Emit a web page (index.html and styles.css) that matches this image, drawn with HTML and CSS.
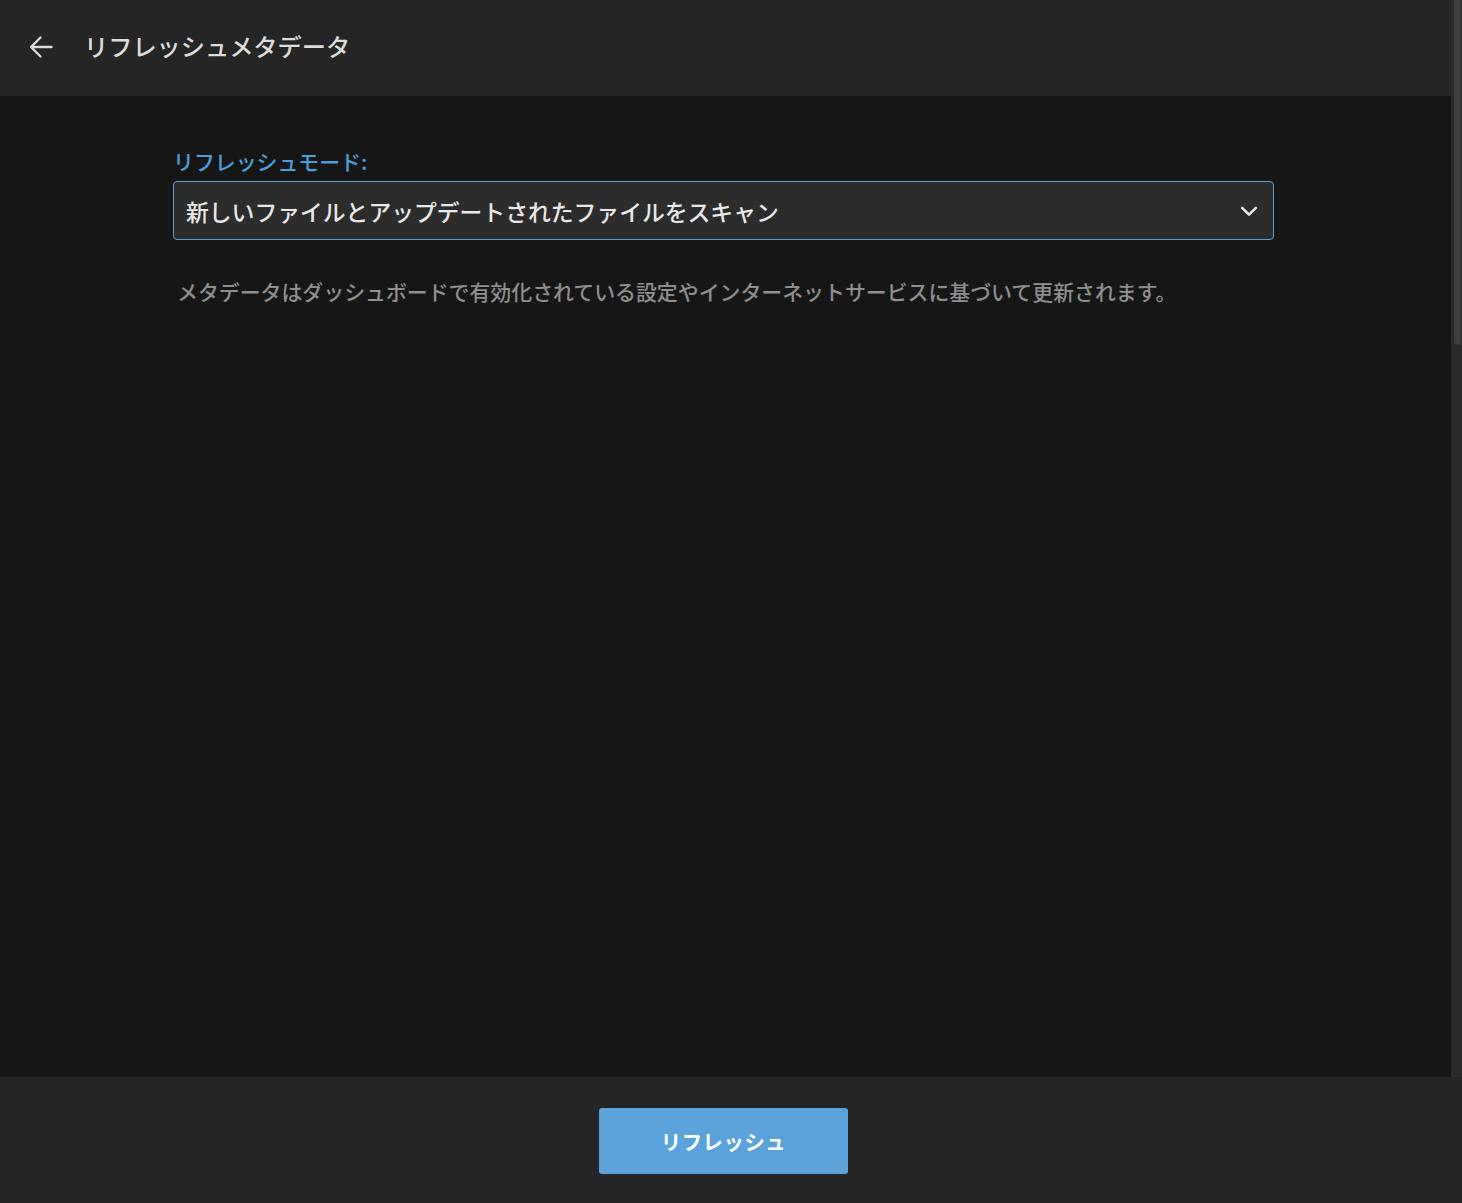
FILE: index.html
```html
<!DOCTYPE html>
<html lang="ja">
<head>
<meta charset="utf-8">
<title>リフレッシュメタデータ</title>
<link rel="stylesheet" href="styles.css">
</head>
<body>
<div class="app">
  <div class="top">
    <div class="page">
      <header class="header">
        <button class="back" aria-label="戻る">
          <svg width="24" height="24" viewBox="0 0 24 24"><path d="M22.5 12H2M11.5 2.5 2 12l9.5 9.5" fill="none" stroke="#dcdcdc" stroke-width="2.4" stroke-linecap="round" stroke-linejoin="round"/></svg>
        </button>
        <h1 class="title">リフレッシュメタデータ</h1>
      </header>
      <main class="main">
        <div class="form">
          <label class="label">リフレッシュモード:</label>
          <div class="select">
            <span class="select-text">新しいファイルとアップデートされたファイルをスキャン</span>
            <svg class="chev" width="22" height="22" viewBox="0 0 24 24"><path d="M4.5 8.5l7.5 7.5 7.5-7.5" fill="none" stroke="#e6e6e6" stroke-width="2.8" stroke-linecap="round" stroke-linejoin="round"/></svg>
          </div>
          <p class="desc">メタデータはダッシュボードで有効化されている設定やインターネットサービスに基づいて更新されます。</p>
        </div>
      </main>
    </div>
    <div class="scrollbar"><div class="thumb"></div></div>
  </div>
  <footer class="footer">
    <button class="primary">リフレッシュ</button>
  </footer>
</div>
</body>
</html>
```

FILE: styles.css
```css
* { box-sizing: border-box; }
html, body { margin: 0; padding: 0; height: 100%; }
body {
  background: #161616;
  font-family: "Noto Sans CJK JP", "Noto Sans", sans-serif;
  color: #e6e6e6;
}
.app {
  display: flex;
  flex-direction: column;
  height: 1203px;
}
.top {
  flex: 1;
  display: flex;
  min-height: 0;
}
.page {
  flex: 1;
  display: flex;
  flex-direction: column;
}
.header {
  height: 96px;
  background: #252525;
  display: flex;
  align-items: center;
  padding: 0 0 4px 29px;
}
.back {
  background: none;
  border: 0;
  padding: 0;
  width: 26px;
  height: 26px;
  display: flex;
  align-items: center;
  justify-content: flex-start;
  margin-top: 2px;
}
.title {
  margin: 0 0 0 29px;
  font-size: 24.2px;
  font-weight: 500;
  color: #dcdcdc;
  line-height: 1;
}
.main {
  flex: 1;
  background: #161616;
  padding: 52px 0 0 173px;
}
.form {
  width: 1101px;
  display: flex;
  flex-direction: column;
}
.label {
  font-size: 20.9px;
  font-weight: 500;
  line-height: 26px;
  color: #4a9edb;
  margin-bottom: 7px;
}
.select {
  height: 59px;
  border: 1px solid #5b9bd0;
  border-radius: 4px;
  background: #2c2c2c;
  display: flex;
  align-items: center;
  justify-content: space-between;
  padding: 3px 13px 0 12px;
}
.select-text {
  font-size: 22.8px;
  font-weight: 500;
  color: #e8e8e8;
  line-height: 1;
}
.chev { flex: none; margin-top: -2px; }
.desc {
  margin: 36px 0 0 4px;
  font-size: 20.9px;
  font-weight: 500;
  line-height: 30px;
  color: #8e8e8e;
}
.scrollbar {
  width: 11px;
  background: #2a2a2a;
  padding: 0 1px 0 3px;
}
.thumb {
  height: 345px;
  background: #3d3d3d;
  border-radius: 0 0 4px 4px;
}
.footer {
  height: 126px;
  background: #252525;
  display: flex;
  justify-content: center;
  padding: 31px 15px 0 0;
}
.primary {
  width: 249px;
  height: 66px;
  border: 0;
  border-radius: 3px;
  background: #5ca2da;
  color: #ffffff;
  font-family: "Noto Sans CJK JP", sans-serif;
  font-size: 20.4px;
  font-weight: 700;
  letter-spacing: 0.5px;
}
```
